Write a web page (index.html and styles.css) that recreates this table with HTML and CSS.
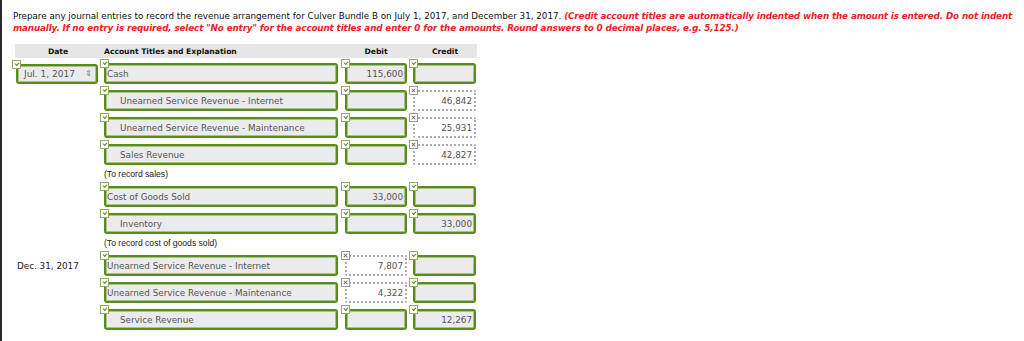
FILE: index.html
```html
<!DOCTYPE html>
<html>
<head>
<meta charset="utf-8">
<link rel="stylesheet" href="styles.css">
</head>
<body>
<div class="page">
  <div class="instructions">
    <div class="line">Prepare any journal entries to record the revenue arrangement for Culver Bundle B on July 1, 2017, and December 31, 2017. <em class="warn">(Credit account titles are automatically indented when the amount is entered. Do not indent</em></div>
    <div class="line"><em class="warn">manually. If no entry is required, select "No entry" for the account titles and enter 0 for the amounts. Round answers to 0 decimal places, e.g. 5,125.)</em></div>
  </div>

  <div class="journal">
    <div class="row head">
      <div class="h center c1">Date</div>
      <div class="h">Account Titles and Explanation</div>
      <div class="h center c3">Debit</div>
      <div class="h center">Credit</div>
    </div>

    <div class="row">
      <div class="cell"><div class="field select"><span class="ok"></span><span>Jul. 1, 2017</span><span class="arrows">&#8661;</span></div></div>
      <div class="cell"><div class="field acct"><span class="ok"></span>Cash</div></div>
      <div class="cell"><div class="field num"><span class="ok"></span>115,600</div></div>
      <div class="cell"><div class="field num"><span class="ok"></span></div></div>
    </div>

    <div class="row">
      <div class="cell"></div>
      <div class="cell"><div class="field acct indent"><span class="ok"></span>Unearned Service Revenue - Internet</div></div>
      <div class="cell"><div class="field num"><span class="ok"></span></div></div>
      <div class="cell"><div class="field num bad"><span class="no"></span>46,842</div></div>
    </div>

    <div class="row">
      <div class="cell"></div>
      <div class="cell"><div class="field acct indent"><span class="ok"></span>Unearned Service Revenue - Maintenance</div></div>
      <div class="cell"><div class="field num"><span class="ok"></span></div></div>
      <div class="cell"><div class="field num bad"><span class="no"></span>25,931</div></div>
    </div>

    <div class="row">
      <div class="cell"></div>
      <div class="cell"><div class="field acct indent"><span class="ok"></span>Sales Revenue</div></div>
      <div class="cell"><div class="field num"><span class="ok"></span></div></div>
      <div class="cell"><div class="field num bad"><span class="no"></span>42,827</div></div>
    </div>

    <div class="note">(To record sales)</div>

    <div class="row">
      <div class="cell"></div>
      <div class="cell"><div class="field acct"><span class="ok"></span>Cost of Goods Sold</div></div>
      <div class="cell"><div class="field num"><span class="ok"></span>33,000</div></div>
      <div class="cell"><div class="field num"><span class="ok"></span></div></div>
    </div>

    <div class="row">
      <div class="cell"></div>
      <div class="cell"><div class="field acct indent"><span class="ok"></span>Inventory</div></div>
      <div class="cell"><div class="field num"><span class="ok"></span></div></div>
      <div class="cell"><div class="field num"><span class="ok"></span>33,000</div></div>
    </div>

    <div class="note">(To record cost of goods sold)</div>

    <div class="row">
      <div class="cell date">Dec. 31, 2017</div>
      <div class="cell"><div class="field acct"><span class="ok"></span>Unearned Service Revenue - Internet</div></div>
      <div class="cell"><div class="field num bad"><span class="no"></span>7,807</div></div>
      <div class="cell"><div class="field num"><span class="ok"></span></div></div>
    </div>

    <div class="row">
      <div class="cell"></div>
      <div class="cell"><div class="field acct"><span class="ok"></span>Unearned Service Revenue - Maintenance</div></div>
      <div class="cell"><div class="field num bad"><span class="no"></span>4,322</div></div>
      <div class="cell"><div class="field num"><span class="ok"></span></div></div>
    </div>

    <div class="row">
      <div class="cell"></div>
      <div class="cell"><div class="field acct indent"><span class="ok"></span>Service Revenue</div></div>
      <div class="cell"><div class="field num"><span class="ok"></span></div></div>
      <div class="cell"><div class="field num"><span class="ok"></span>12,267</div></div>
    </div>
  </div>
</div>
</body>
</html>
```

FILE: styles.css
```css
html, body {
  margin: 0;
  padding: 0;
  background: #fff;
}
body {
  font-family: "DejaVu Sans", Verdana, sans-serif;
  color: #222;
  height: 341px;
  overflow: hidden;
}
.page {
  border-left: 2px solid #2a2a2a;
  height: 341px;
  box-sizing: border-box;
  padding: 10px 0 0 11px;
}
.instructions {
  font-size: 8.77px;
  line-height: 12px;
  width: 1002px;
  color: #111;
}
.line {
  white-space: nowrap;
  height: 12px;
}
.warn {
  color: #ee1c25;
  font-weight: bold;
  font-style: italic;
  letter-spacing: -0.12px;
}
.journal {
  margin: 10px 0 0 2px;
  width: 462px;
}
.row {
  display: grid;
  grid-template-columns: 88px 241px 68px 64px;
  padding-left: 1px;
  margin-top: 6px;
  align-items: center;
}
.row.head {
  background: #e6e6e6;
  height: 14px;
  margin-top: 0;
  margin-bottom: -1px;
}
.h {
  font-size: 7.6px;
  font-weight: bold;
  color: #111;
}
.h.c1 { padding-right: 4px; }
.h.c3 { padding-right: 6px; }
.center { text-align: center; }
.cell {
  min-width: 0;
}
.row > .cell:nth-child(1) { padding-right: 4px; }
.row > .cell:nth-child(2) { padding-right: 7px; }
.row > .cell:nth-child(3) { padding-right: 6px; }
.row > .cell:nth-child(4) { padding-right: 1px; }
.date {
  font-size: 8.8px;
  color: #222;
  padding-left: 1px;
}
.field {
  position: relative;
  box-sizing: border-box;
  height: 21px;
  border: 2px solid #5c8a1d;
  border-radius: 3px;
  background: #ebebee;
  font-size: 8.8px;
  color: #555;
  display: flex;
  align-items: center;
  white-space: nowrap;
  box-shadow: inset 0 0 0 1px #a9c28a;
}
.field.select {
  width: 82px;
  height: 20px;
  justify-content: space-between;
  padding: 0 4px 0 6px;
  font-size: 9px;
}
.arrows {
  font-size: 8px;
  color: #777;
}
.field.acct {
  padding-left: 1px;
}
.field.acct.indent {
  padding-left: 14px;
}
.field.num {
  justify-content: flex-end;
  padding-right: 2px;
}
.field.bad {
  background: #fff;
  border: 2px dotted #aaa;
  border-radius: 2px;
  box-shadow: none;
}
.ok, .no {
  position: absolute;
  left: -6px;
  top: -6px;
  width: 7px;
  height: 7px;
  background: #fff;
  border: 1px solid #8fb064;
}
.ok::after {
  content: "";
  position: absolute;
  left: 2px;
  top: 1px;
  width: 3px;
  height: 2px;
  border-left: 1px solid #5c8a1d;
  border-bottom: 1px solid #5c8a1d;
  transform: rotate(-45deg);
}
.no {
  border-color: #999;
}
.no::before, .no::after {
  content: "";
  position: absolute;
  left: 1px;
  top: 3px;
  width: 5px;
  height: 1px;
  background: #666;
  transform: rotate(45deg);
}
.no::after {
  transform: rotate(-45deg);
}
.note {
  font-family: "Liberation Sans", Arial, sans-serif;
  font-size: 8.6px;
  line-height: 12px;
  color: #222;
  margin: 3px 0 0 89px;
}
```
